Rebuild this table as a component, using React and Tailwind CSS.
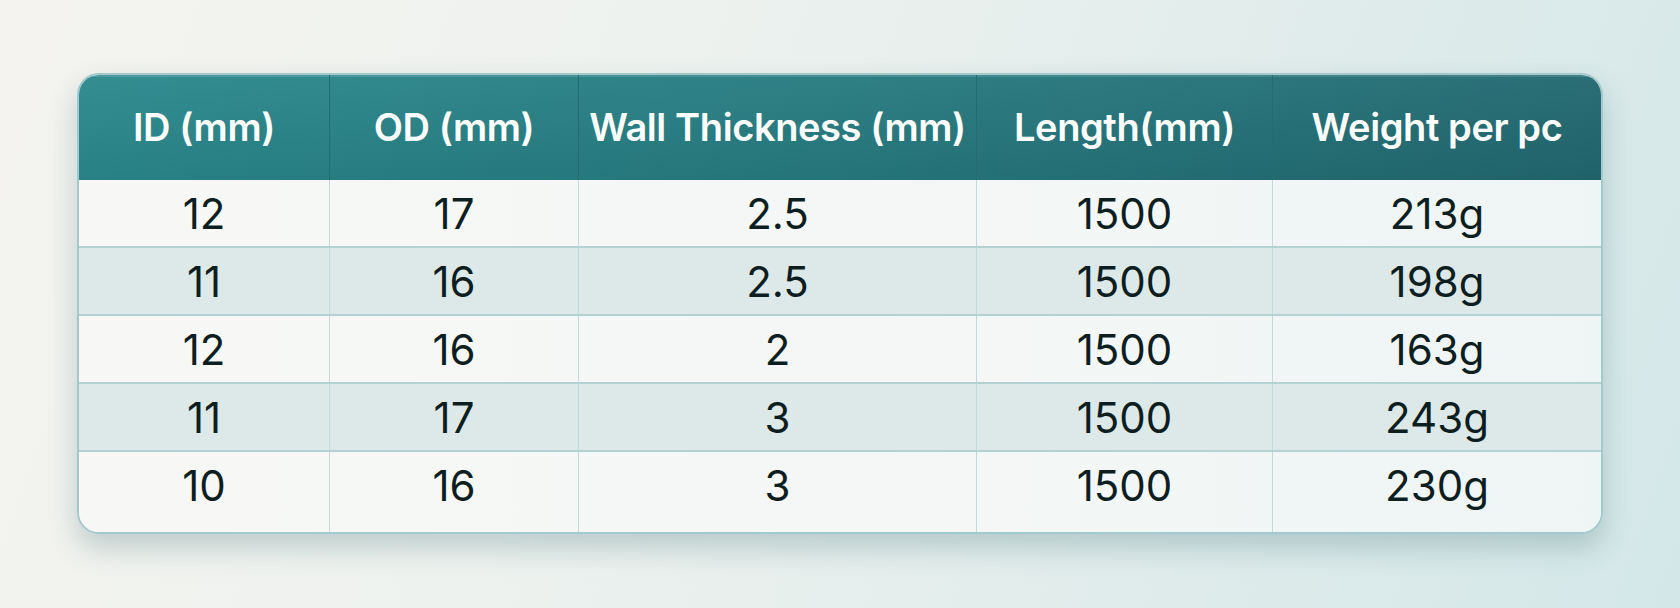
const headers = ["ID (mm)", "OD (mm)", "Wall Thickness (mm)", "Length(mm)", "Weight per pc"];

const rows = [
  ["12", "17", "2.5", "1500", "213g"],
  ["11", "16", "2.5", "1500", "198g"],
  ["12", "16", "2", "1500", "163g"],
  ["11", "17", "3", "1500", "243g"],
  ["10", "16", "3", "1500", "230g"],
];

const cols = "grid grid-cols-[250px_249px_398px_296px_1fr]";

export default function App() {
  return (
    <div
      className="w-[1680px] h-[608px] overflow-hidden bg-[linear-gradient(110deg,#f4f3ef_0%,#eef2ef_35%,#e0eceb_70%,#d4e7e8_100%)] pt-[73px] pl-[77px]"
      style={{ fontFamily: "Inter, 'Noto Sans', sans-serif" }}
    >
      <div className="w-[1526px] rounded-[22px] border-2 border-[#a3c9cc] bg-[#f5f8f7] overflow-hidden shadow-[0_14px_28px_rgba(60,110,115,0.28)]">
        {/* header */}
        <div className={`${cols} h-[105px] bg-[linear-gradient(180deg,rgba(255,255,255,0.04)_0%,rgba(0,0,0,0.06)_100%),linear-gradient(90deg,#2b898d_0%,#267b80_50%,#226870_100%)] shadow-[inset_0_2px_0_rgba(255,255,255,0.12)]`}>
          {headers.map((h, i) => (
            <div
              key={h}
              className={`flex items-center justify-center text-[38px] font-semibold text-white tracking-[-0.4px] ${i > 0 ? "border-l border-[#236c72]" : ""}`}
            >
              {h}
            </div>
          ))}
        </div>

        {/* rows */}
        {rows.map((r, ri) => {
          const last = ri === rows.length - 1;
          return (
            <div
              key={ri}
              className={`${cols} ${ri % 2 === 1 ? "bg-[#dde9e8]" : "bg-[linear-gradient(90deg,#f7f8f6_0%,#f4f7f6_60%,#eef5f5_100%)]"} ${ri > 0 ? "border-t-2 border-[#b5d2d3]" : ""}`}
            >
              {r.map((c, ci) => (
                <div
                  key={ci}
                  className={`flex items-center justify-center text-[42px] text-[#0d1e20] ${last ? "h-[80px] pb-[14px]" : "h-[66px]"} ${ci > 0 ? "border-l border-[#c3dadb]" : ""}`}
                >
                  {c}
                </div>
              ))}
            </div>
          );
        })}
      </div>
    </div>
  );
}
